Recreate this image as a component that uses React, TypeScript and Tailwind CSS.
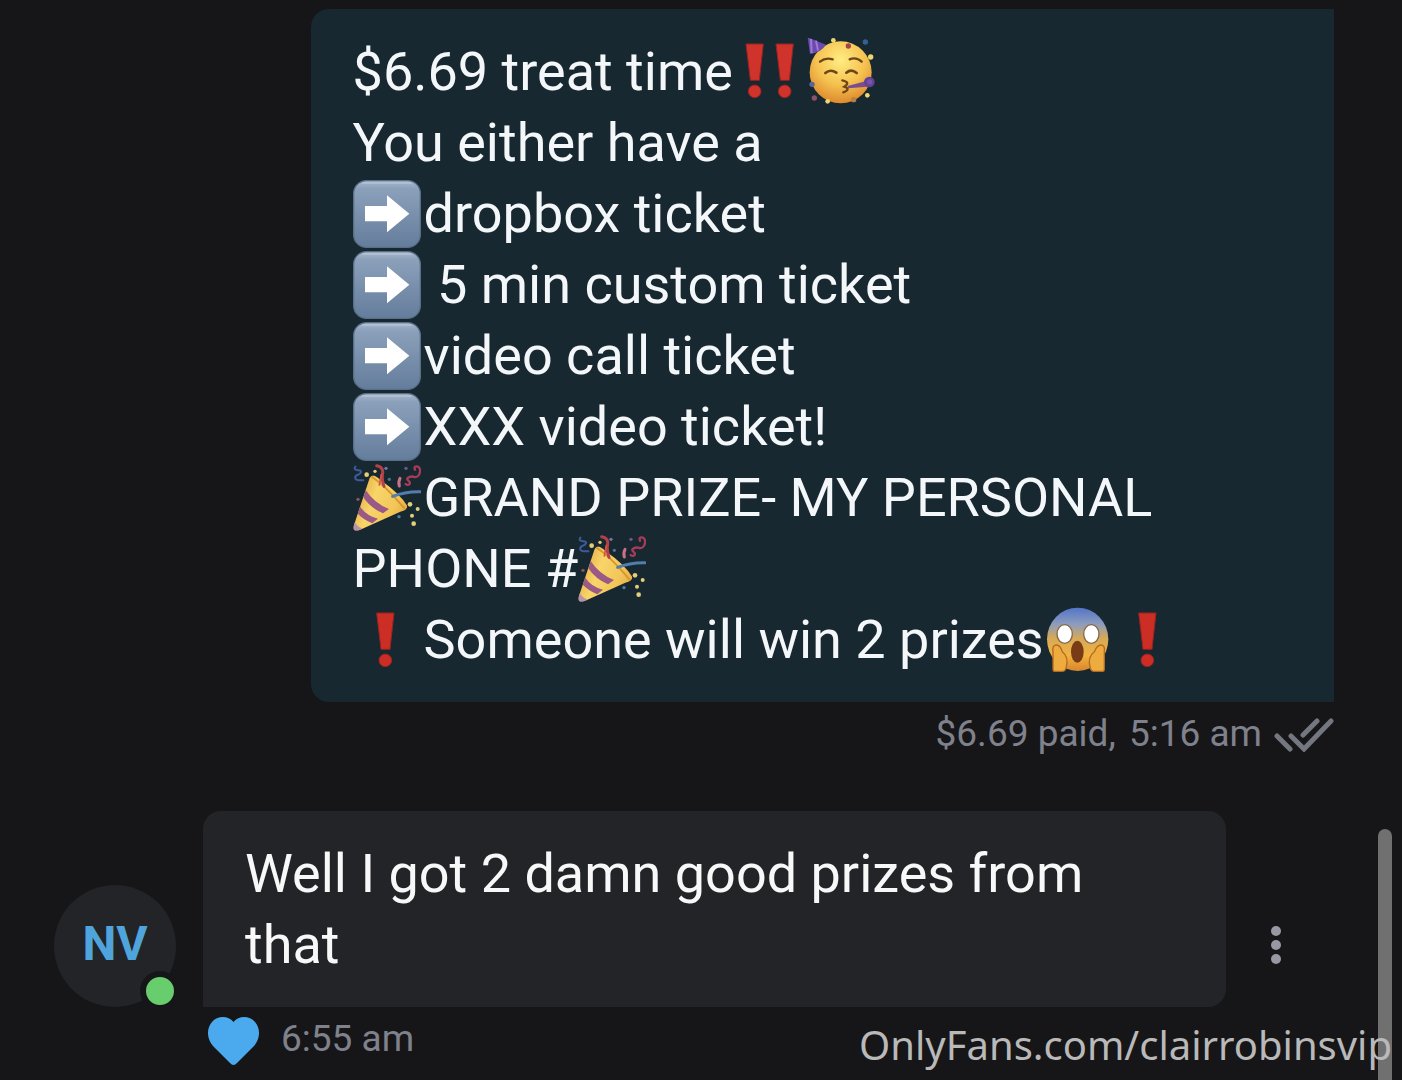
import React from "react";

type EmojiProps = { label: string; children: React.ReactNode };

function Emoji({ label, children }: EmojiProps) {
  return (
    <svg
      role="img"
      aria-label={label}
      viewBox="0 0 204 204"
      className="mr-[3px] size-[68px] shrink-0"
    >
      {children}
    </svg>
  );
}

function ArrowRight() {
  return (
    <Emoji label="right arrow">
      <defs>
        <linearGradient id="key" x1="0" y1="0" x2="0" y2="1">
          <stop offset="0" stopColor="#a9b9cd" />
          <stop offset="0.12" stopColor="#8ba0ba" />
          <stop offset="1" stopColor="#647d9c" />
        </linearGradient>
      </defs>
      <rect x="2" y="2" width="200" height="200" rx="38" fill="url(#key)" stroke="#5a6f88" strokeWidth="4" />
      <path d="M30 9H174" stroke="#c3cfdd" strokeWidth="5" strokeLinecap="round" opacity="0.6" />
      <path d="M36 78H102V46L169 101L102 157V124H36Z" fill="#fff" />
    </Emoji>
  );
}

function Bang() {
  return (
    <Emoji label="exclamation mark">
      <g fill="#cc2d25" stroke="#952420" strokeWidth="3">
        <path d="M71 21H123L111 130H84Z" />
        <circle cx="97" cy="163" r="19" />
      </g>
    </Emoji>
  );
}

function DoubleBang() {
  return (
    <Emoji label="double exclamation mark">
      <g fill="#d0332b" stroke="#952420" strokeWidth="3">
        <path d="M30 18H82L70 127H43Z" />
        <circle cx="56" cy="160" r="19" />
        <path d="M120 18H172L160 127H133Z" />
        <circle cx="146" cy="160" r="19" />
      </g>
    </Emoji>
  );
}

function PartyFace() {
  return (
    <Emoji label="partying face">
      <defs>
        <radialGradient id="sun" cx="0.5" cy="0.3" r="0.72">
          <stop offset="0" stopColor="#ffed83" />
          <stop offset="0.55" stopColor="#f5c250" />
          <stop offset="1" stopColor="#dc862b" />
        </radialGradient>
      </defs>
      <circle cx="101" cy="103" r="93" fill="url(#sun)" />
      <path d="M2 -2L57 20Q42 44 9 48Z" fill="#6c4bb0" />
      <path d="M12 3L14 45M27 8L33 38" stroke="#9d7ad4" strokeWidth="6" />
      <g fill="none" stroke="#6f4617" strokeLinecap="round">
        <path d="M39 71Q56 57 77 64M128 64Q148 56 164 71" strokeWidth="7" />
        <path d="M55 105Q70 92 88 104M118 104Q133 92 149 105" strokeWidth="8" />
        <path d="M106 127Q132 133 112 146Q133 154 109 163" strokeWidth="7" />
      </g>
      <path d="M122 144L181 128V146L124 151Z" fill="#7b4c91" />
      <circle cx="187" cy="132" r="16" fill="#604296" />
      <circle cx="188" cy="132" r="8" fill="#7853a7" />
      <g fill="#f0d673">
        <circle cx="79" cy="7" r="7" />
        <circle cx="191" cy="57" r="8" />
        <circle cx="181" cy="172" r="7" />
        <circle cx="62" cy="190" r="7" />
      </g>
      <circle cx="175" cy="12" r="8" fill="#336197" />
      <circle cx="124" cy="24" r="8" fill="#a64545" />
      <circle cx="15" cy="139" r="8" fill="#59659d" />
      <circle cx="22" cy="180" r="8" fill="#8b526b" />
      <circle cx="140" cy="185" r="8" fill="#b98143" />
    </Emoji>
  );
}

function Popper() {
  return (
    <Emoji label="party popper">
      <defs>
        <linearGradient id="cone" x1="0" y1="0.4" x2="1" y2="0.8">
          <stop offset="0" stopColor="#e0a53b" />
          <stop offset="0.3" stopColor="#f8d56a" />
          <stop offset="0.6" stopColor="#f3c658" />
          <stop offset="1" stopColor="#d99130" />
        </linearGradient>
        <clipPath id="coneShape">
          <path d="M2 186L50 42Q58 24 82 48Q140 88 163 126Q163 139 142 143L20 198Q-2 204 2 186Z" />
        </clipPath>
      </defs>
      <g clipPath="url(#coneShape)">
        <rect width="204" height="204" fill="url(#cone)" />
        <path d="M38 78Q64 118 108 135L90 148Q52 132 31 100Z" fill="#9b5a86" />
        <path d="M20 126Q40 156 75 164L58 178Q28 165 12 146Z" fill="#9b5a86" />
        <path d="M4 172Q12 188 27 193L10 208L-4 194Z" fill="#b892ad" />
      </g>
      <path d="M57 39Q97 65 154 133" fill="none" stroke="#d69731" strokeWidth="6" strokeLinecap="round" />
      <g fill="none" strokeLinecap="round">
        <path d="M7 8C-3 25 31 13 23 26C17 36 3 31 7 43C10 53 20 47 31 49" stroke="#3c5b9d" strokeWidth="6" />
        <path d="M71 5Q94 9 88 34Q87 51 93 67" stroke="#b44149" strokeWidth="9" />
        <path d="M85 31L79 63" stroke="#cf5545" strokeWidth="5" />
        <path d="M139 66Q135 55 141 43" stroke="#ca718a" strokeWidth="9" />
        <path d="M158 60C166 68 177 57 166 50C155 42 174 35 184 39C203 42 208 6 190 7Q182 8 186 17" stroke="#a83c58" strokeWidth="7" />
        <path d="M119 97Q157 82 201 83" stroke="#527dad" strokeWidth="9" />
      </g>
      <g fill="#e3ce79">
        <circle cx="41" cy="32" r="7" />
        <circle cx="66" cy="22" r="5" />
        <circle cx="171" cy="121" r="7" />
        <circle cx="194" cy="135" r="6" />
        <circle cx="177" cy="155" r="6" />
        <circle cx="182" cy="179" r="7" />
      </g>
      <circle cx="99" cy="13" r="5" fill="#7474a6" />
      <circle cx="138" cy="158" r="5" fill="#4d80a4" />
      <circle cx="159" cy="13" r="5" fill="#6d5891" />
      <circle cx="109" cy="46" r="5" fill="#4f738d" />
      <circle cx="15" cy="106" r="5" fill="#8d5455" />
    </Emoji>
  );
}

function Scream() {
  return (
    <Emoji label="screaming face">
      <defs>
        <linearGradient id="fright" x1="0" y1="0" x2="0" y2="1">
          <stop offset="0" stopColor="#5375ca" />
          <stop offset="0.26" stopColor="#8c9cbd" />
          <stop offset="0.48" stopColor="#d5a959" />
          <stop offset="0.75" stopColor="#f1b240" />
          <stop offset="1" stopColor="#d9862b" />
        </linearGradient>
      </defs>
      <ellipse cx="101" cy="100" rx="92" ry="95" fill="url(#fright)" />
      <g fill="#fff" stroke="#846747" strokeWidth="4">
        <ellipse cx="62" cy="84" rx="23" ry="28" />
        <ellipse cx="142" cy="84" rx="23" ry="28" />
      </g>
      <ellipse cx="100" cy="137" rx="19" ry="33" fill="#793b16" />
      <g fill="#edac3d" stroke="#b46a24" strokeWidth="4">
        <path d="M27 190V137Q24 117 38 117Q48 117 55 137Q76 153 66 186Q64 197 52 196H34Q27 197 27 190Z" />
        <path d="M181 190V137Q184 117 170 117Q160 117 151 137Q129 153 139 186Q141 197 153 196H174Q181 197 181 190Z" />
      </g>
    </Emoji>
  );
}

function Line({ children }: { children: React.ReactNode }) {
  return <p className="flex h-[71px] items-center whitespace-pre">{children}</p>;
}

export default function App() {
  return (
    <main className="relative min-h-screen overflow-hidden bg-[#161618] pt-[9px] font-[Roboto,sans-serif] text-white">
      <section className="flex flex-col items-end pr-[68px]">
        <div className="w-[73vw] rounded-l-[18px] bg-[#182830] px-[42px] py-[27px] text-[54px] leading-[71px] text-[#f4f7f9]">
          <Line><span className="mr-[3px]">$6.69 treat time</span><DoubleBang /><PartyFace /></Line>
          <Line>You either have a</Line>
          <Line><ArrowRight />dropbox ticket</Line>
          <Line><ArrowRight /> 5 min custom ticket</Line>
          <Line><ArrowRight />video call ticket</Line>
          <Line><ArrowRight />XXX video ticket!</Line>
          <Line><Popper />GRAND PRIZE- MY PERSONAL</Line>
          <Line>PHONE #<Popper /></Line>
          <Line><Bang />Someone will win 2 prizes<Scream /><Bang /></Line>
        </div>
        <div className="flex h-16 items-center gap-3 text-[37px] text-[#7f828c]">
          <p><span className="mr-1">$6.69 paid,</span> <time>5:16 am</time></p>
          <svg role="img" aria-label="Read" viewBox="0 0 60 36" className="h-9 w-[60px]" fill="none" stroke="#747780" strokeWidth="5" strokeLinecap="round">
            <path d="M3 20L16 33M17 20L30 33L57 5M29 19L43 5" />
          </svg>
        </div>
      </section>

      <section className="mt-[45px] flex items-end pl-[54px]">
        <div className="relative mr-[27px] flex size-[122px] shrink-0 items-center justify-center rounded-full bg-[#232428] pb-1 text-[48px] font-bold text-[#4fa4dc]">
          NV
          <span className="absolute right-[-4px] bottom-[-4px] size-10 rounded-full border-[6px] border-[#161618] bg-[#68cd6c]" />
        </div>
        <p className="flex-1 rounded-[18px] rounded-bl-none bg-[#232428] px-[42px] py-[27px] text-[54px] leading-[71px] text-[#f8f8f9]">
          Well I got 2 damn good prizes from that
        </p>
        <button aria-label="Message options" className="mr-[110px] mb-[37px] ml-[34px] flex h-[50px] w-8 shrink-0 flex-col items-center justify-center gap-1 text-[#9698a4]">
          <span className="size-[10px] rounded-full bg-current" />
          <span className="size-[10px] rounded-full bg-current" />
          <span className="size-[10px] rounded-full bg-current" />
        </button>
      </section>

      <div className="flex h-16 items-center gap-[22px] pl-[208px] text-[37px] text-[#7f828c]">
        <button aria-label="Like" className="pt-1">
          <svg viewBox="0 0 51 49" className="h-[49px] w-[51px]" fill="#4ba9ed">
            <path d="M25.500 5C20 -2 9 -1 4 5C-2 12 -1 22 5 29L22 46Q25.500 50 29 46L46 29C52 22 53 12 47 5C42 -1 31 -2 25.500 5Z" />
          </svg>
        </button>
        <time>6:55 am</time>
      </div>

      <div className="absolute right-[10px] bottom-0 h-[251px] w-[14px] rounded-t-full bg-[#707070]" />
      <a href="#profile" className="absolute right-[10px] bottom-[7px] font-['Noto_Sans',sans-serif] text-[40px] leading-[56px] text-[#b9b9b9]">
        OnlyFans.com/clairrobinsvip
      </a>
    </main>
  );
}
